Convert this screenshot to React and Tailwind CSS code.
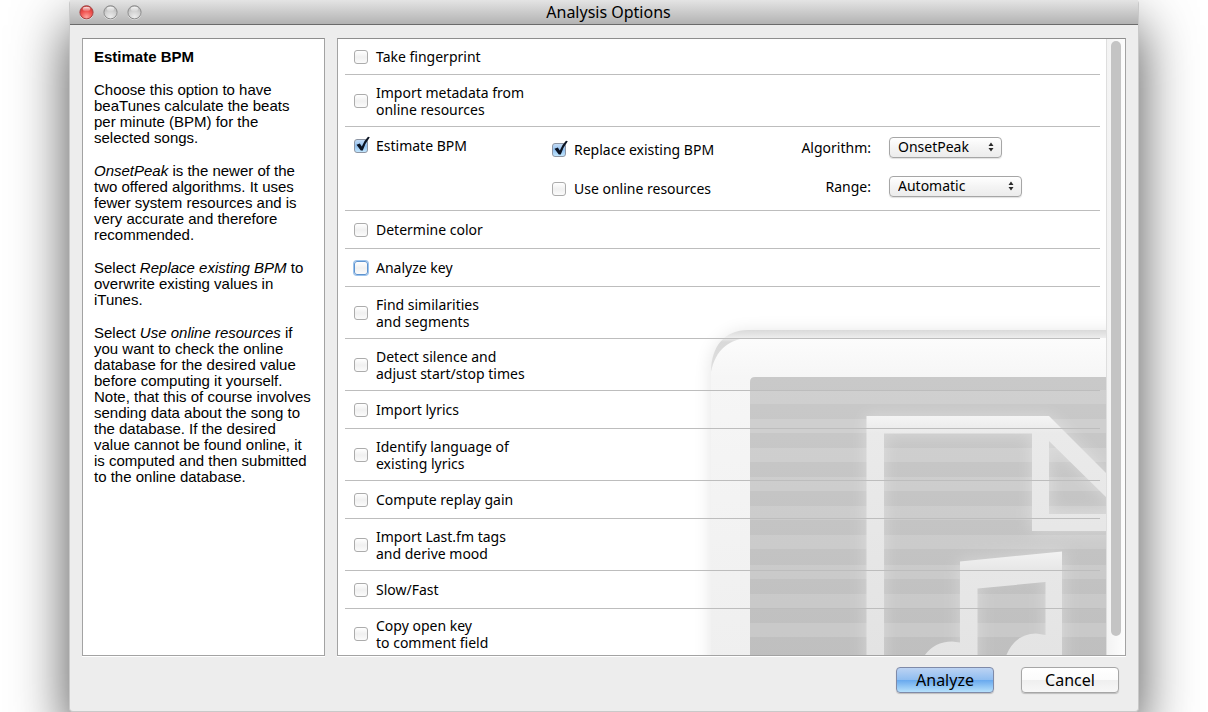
import { useState } from "react";
import clsx from "clsx";

const ROWS_BEFORE = [
  { id: "fingerprint", lines: ["Take fingerprint"], size: "min-h-9" },
  { id: "metadata", lines: ["Import metadata from", "online resources"], size: "min-h-[52px]" },
];

const ROWS_AFTER = [
  { id: "color", lines: ["Determine color"], size: "min-h-[38px]" },
  { id: "key", lines: ["Analyze key"], size: "min-h-[38px]", focused: true },
  { id: "similarities", lines: ["Find similarities", "and segments"], size: "min-h-[52px]" },
  { id: "silence", lines: ["Detect silence and", "adjust start/stop times"], size: "min-h-[52px]" },
  { id: "lyrics", lines: ["Import lyrics"], size: "min-h-[38px]" },
  { id: "language", lines: ["Identify language of", "existing lyrics"], size: "min-h-[52px]" },
  { id: "gain", lines: ["Compute replay gain"], size: "min-h-[38px]" },
  { id: "lastfm", lines: ["Import Last.fm tags", "and derive mood"], size: "min-h-[52px]" },
  { id: "tempo", lines: ["Slow/Fast"], size: "min-h-[38px]" },
  { id: "openkey", lines: ["Copy open key", "to comment field"], last: true },
];

function Checkbox({ id, lines, defaultChecked = false, focused = false }) {
  const [checked, setChecked] = useState(defaultChecked);
  return (
    <div className="flex items-center gap-2">
      <span className="relative flex size-3.5 shrink-0">
        <input
          id={id}
          type="checkbox"
          checked={checked}
          onChange={(e) => setChecked(e.target.checked)}
          className={clsx(
            "size-3.5 appearance-none rounded-[3px] border bg-linear-to-b outline-none",
            checked
              ? "border-[#8d95a3] from-[#c3dbf5] via-[#92c1f0] to-[#c2e6fd]"
              : "from-white via-[#f0f0f0] to-[#fbfbfb]",
            !checked && (focused ? "border-[#5e93cf] ring-1 ring-[#9cc3ec]" : "border-[#acacac]")
          )}
        />
        {checked && (
          <svg viewBox="0 0 16 18" className="pointer-events-none absolute bottom-0 left-0 h-[18px] w-4">
            <path d="M2.500 9.800 5.800 8.400 7.800 11.500Q10.200 5.500 14 1.800L15.800 2.200Q11.200 8 8.800 15.600H6.800Z" fill="#0b1322" />
          </svg>
        )}
      </span>
      <label htmlFor={id}>
        {lines.map((line) => (
          <span key={line} className="block">{line}</span>
        ))}
      </label>
    </div>
  );
}

function OptionRow({ row }) {
  return (
    <li
      className={clsx(
        "flex items-center pl-[9px]",
        row.size,
        row.last ? "pt-2 pb-1" : "border-b border-[#bdbdbd]"
      )}
    >
      <Checkbox id={row.id} lines={row.lines} focused={row.focused} />
    </li>
  );
}

function Popup({ id, options, width }) {
  return (
    <div className={clsx("relative", width)}>
      <select
        id={id}
        className="block h-[21px] w-full appearance-none rounded-[4px] border border-[#a6a6a6] bg-linear-to-b from-white via-[#f4f4f4] to-[#ececec] pb-0.5 pl-2 text-[14px] leading-4 text-black shadow-[0_1px_1px_rgba(0,0,0,0.12)] outline-none"
      >
        {options.map((o) => (
          <option key={o}>{o}</option>
        ))}
      </select>
      <svg viewBox="0 0 6 10" className="pointer-events-none absolute top-[5px] right-2 h-2.5 w-1.5">
        <path d="M3 0.500 5.500 4H0.500ZM3 9.500 5.500 6H0.500Z" fill="#2a2a2a" />
      </svg>
    </div>
  );
}

function TrafficLight({ label, color }) {
  return (
    <button type="button" aria-label={label} className="size-[15px]">
      <svg viewBox="0 0 15 15" className="size-[15px]">
        <defs>
          <linearGradient id={`${label}-shine`} x1="0" y1="0" x2="0" y2="1">
            <stop offset="0" stopColor="#fff" stopOpacity="0.9" />
            <stop offset="1" stopColor="#fff" stopOpacity="0.1" />
          </linearGradient>
          <radialGradient id={`${label}-fill`} cx="0.5" cy="0.85" r="0.8">
            <stop offset="0" stopColor={color.glow} />
            <stop offset="0.55" stopColor={color.base} />
            <stop offset="1" stopColor={color.edge} />
          </radialGradient>
        </defs>
        <circle cx="7.500" cy="8" r="6.900" fill="#fff" opacity="0.6" />
        <circle cx="7.500" cy="7.300" r="6.600" fill={`url(#${label}-fill)`} stroke={color.ring} strokeWidth="1" />
        <ellipse cx="7.500" cy="4" rx="3.800" ry="2.300" fill={`url(#${label}-shine)`} />
      </svg>
    </button>
  );
}

const RED = { glow: "#ffa49c", base: "#f05450", edge: "#c93331", ring: "#a34444" };
const GREY = { glow: "#ececec", base: "#d2d2d2", edge: "#b4b4b4", ring: "#8a8a8a" };

const STRIPES = [390, 419, 448, 477, 506, 535, 565, 594, 623];

// Faded player icon behind the option list
function Backdrop() {
  return (
    <svg
      viewBox="680 300 426 355"
      aria-hidden="true"
      className="pointer-events-none absolute right-[19px] bottom-0 h-[355px] w-[426px]"
    >
      <defs>
        <filter id="soft" x="-20%" y="-20%" width="140%" height="140%">
          <feGaussianBlur stdDeviation="9" />
        </filter>
        <filter id="glow" x="-20%" y="-20%" width="140%" height="140%">
          <feGaussianBlur stdDeviation="8" />
        </filter>
        <linearGradient id="lip" gradientUnits="userSpaceOnUse" x1="0" y1="330" x2="0" y2="370">
          <stop offset="0" stopColor="#dadada" />
          <stop offset="0.2" stopColor="#ededed" />
          <stop offset="0.3" stopColor="#d9d9d9" />
          <stop offset="1" stopColor="#dedede" />
        </linearGradient>
        <linearGradient id="shell" x1="0" y1="0" x2="0" y2="1">
          <stop offset="0" stopColor="#fcfcfc" />
          <stop offset="0.12" stopColor="#f6f6f6" />
          <stop offset="1" stopColor="#efefef" />
        </linearGradient>
        <linearGradient id="screen" x1="0" y1="0" x2="0" y2="1">
          <stop offset="0" stopColor="#c9c9c9" />
          <stop offset="1" stopColor="#bfbfbf" />
        </linearGradient>
        <linearGradient id="paper" gradientUnits="userSpaceOnUse" x1="0" y1="416" x2="0" y2="655">
          <stop offset="0" stopColor="#f4f4f4" />
          <stop offset="0.07" stopColor="#eaeaea" />
          <stop offset="1" stopColor="#e3e3e3" />
        </linearGradient>
        <linearGradient id="note" gradientUnits="userSpaceOnUse" x1="0" y1="551" x2="0" y2="655">
          <stop offset="0" stopColor="#f3f3f3" />
          <stop offset="0.18" stopColor="#e7e7e7" />
          <stop offset="1" stopColor="#e4e4e4" />
        </linearGradient>
        <clipPath id="screenClip">
          <path d="M750 660V382Q750 377 755 377H1110V660Z" />
        </clipPath>
      </defs>
      <path d="M711 700V372C711 346 728 332 748 332H1150V700Z" fill="#000" opacity="0.11" filter="url(#soft)" />
      <path d="M711 372C711 346 725 330 748 330H1110V372Z" fill="url(#lip)" />
      <path d="M711 660V372C715 350 730 338 750 338H1110V660Z" fill="url(#shell)" />
      <g clipPath="url(#screenClip)">
        <path d="M750 377H1110V660H750Z" fill="url(#screen)" />
        {STRIPES.map((y) => (
          <path key={y} d={`M750 ${y}H1110v14H750Z`} fill="#fff" opacity="0.14" />
        ))}
        <g fill="none" stroke="#fff" strokeWidth="20" opacity="0.3" filter="url(#glow)">
          <path d="M875 680V425H1046L1130 509M1041 425V522H1130" />
          <path d="M969 680V570L1054 561V680" />
        </g>
        <path
          d="M866.500 660V416H1049L1112 479V503L1049 441V514H1112V531H1032V433.500H884V660Z"
          fill="url(#paper)"
        />
        <path
          d="M921 662Q930 642 952 641.500L960 642.500V561.500L1062 551.500V662H1004Q1012 634 1036 633.500L1045.500 635V582L977.500 588.500V662Z"
          fill="url(#note)"
        />
      </g>
    </svg>
  );
}

export default function App() {
  return (
    <div className="min-h-screen overflow-hidden bg-white px-[69px] pb-px font-['Noto_Sans','Lucida_Grande',sans-serif] text-[14px] leading-[17px] text-black">
      <div className="rounded-[4px] border-x border-b border-[#c9c9c9] bg-[#ededed] shadow-[0_25px_55px_rgba(0,0,0,0.7)]">
        <header className="grid h-[25px] grid-cols-[1fr_auto_1fr] items-center border-b border-[#6b6b6b] bg-linear-to-b from-[#e4e4e4] to-[#b3b3b3] pl-[9px]">
          <div className="flex gap-[9px]">
            <TrafficLight label="Close" color={RED} />
            <TrafficLight label="Minimize" color={GREY} />
            <TrafficLight label="Zoom" color={GREY} />
          </div>
          <h1 className="text-[16px] leading-6">Analysis Options</h1>
        </header>

        <main className="flex gap-3 px-3 pt-[13px]">
          <section className="w-[243px] shrink-0 space-y-[17px] border border-[#a3a3a3] border-t-[#8e8e8e] bg-white py-2.5 pl-[11px] font-['Liberation_Sans',Helvetica,sans-serif] text-[15px] leading-4 shadow-[0_1px_0_#fff]">
            <h2 className="font-bold">Estimate BPM</h2>
            <p>
              Choose this option to have<br />
              beaTunes calculate the beats<br />
              per minute (BPM) for the<br />
              selected songs.
            </p>
            <p>
              <em>OnsetPeak</em> is the newer of the<br />
              two offered algorithms. It uses<br />
              fewer system resources and is<br />
              very accurate and therefore<br />
              recommended.
            </p>
            <p>
              Select <em>Replace existing BPM</em> to<br />
              overwrite existing values in<br />
              iTunes.
            </p>
            <p>
              Select <em>Use online resources</em> if<br />
              you want to check the online<br />
              database for the desired value<br />
              before computing it yourself.<br />
              Note, that this of course involves<br />
              sending data about the song to<br />
              the database. If the desired<br />
              value cannot be found online, it<br />
              is computed and then submitted<br />
              to the online database.
            </p>
          </section>

          <section className="relative flex min-w-0 flex-1 border border-[#a3a3a3] border-t-[#8e8e8e] bg-white shadow-[0_1px_0_#fff]">
            <Backdrop />
            <ul className="relative min-w-0 flex-1 pr-1.5 pl-[7px]">
              {ROWS_BEFORE.map((row) => (
                <OptionRow key={row.id} row={row} />
              ))}
              <li className="flex min-h-[84px] items-start border-b border-[#bdbdbd] pt-2.5 pl-[9px]">
                <div className="w-[198px] shrink-0">
                  <Checkbox id="bpm" lines={["Estimate BPM"]} defaultChecked />
                </div>
                <div className="w-[213px] shrink-0 space-y-[22px] pt-1">
                  <Checkbox id="replace" lines={["Replace existing BPM"]} defaultChecked />
                  <Checkbox id="online" lines={["Use online resources"]} />
                </div>
                <div className="grid grid-cols-[106px_auto] items-center justify-start gap-x-[18px] gap-y-[18px]">
                  <label htmlFor="algorithm" className="text-right">Algorithm:</label>
                  <Popup id="algorithm" options={["OnsetPeak", "BeatRoot"]} width="w-[113px]" />
                  <label htmlFor="range" className="text-right">Range:</label>
                  <Popup id="range" options={["Automatic", "60-120", "80-160"]} width="w-[133px]" />
                </div>
              </li>
              {ROWS_AFTER.map((row) => (
                <OptionRow key={row.id} row={row} />
              ))}
            </ul>
            {/* Scrollbar */}
            <div className="relative w-[19px] shrink-0 border-l border-[#dedede] bg-linear-to-r from-[#f3f3f3] to-[#fdfdfd] px-1 pt-0.5 pb-[19px]">
              <div className="h-full rounded-full bg-[#c4c4c4]" />
            </div>
          </section>
        </main>

        <footer className="flex justify-end gap-[27px] pt-[11px] pr-[19px] pb-[18px]">
          <button
            type="button"
            className="h-[26px] w-[98px] rounded-[4px] border border-[#7f8aa8] bg-[linear-gradient(#bcd3f3,#8fbdf0_50%,#69a9ee_51%,#b6e0fb)] text-[16px] leading-5 shadow-[0_1px_1px_rgba(0,0,0,0.2)]"
          >
            Analyze
          </button>
          <button
            type="button"
            className="h-[26px] w-[98px] rounded-[4px] border border-[#a6a6a6] bg-[linear-gradient(#fff,#fbfbfb_50%,#efefef_51%,#f7f7f7)] text-[16px] leading-5 shadow-[0_1px_1px_rgba(0,0,0,0.2)]"
          >
            Cancel
          </button>
        </footer>
      </div>
    </div>
  );
}
